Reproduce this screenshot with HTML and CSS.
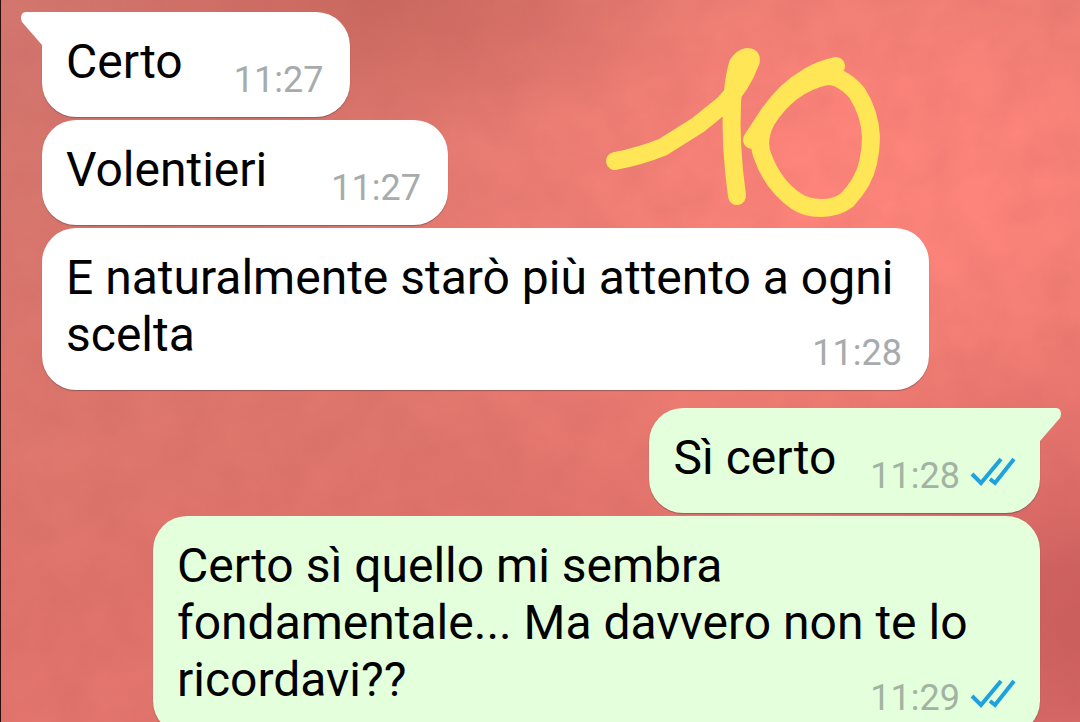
FILE: index.html
```html
<!DOCTYPE html>
<html lang="it">

<head>
    <meta charset="UTF-8">
    <meta name="viewport" content="width=device-width, initial-scale=1.0">
    <title>Chat</title>
    <link rel="stylesheet" href="styles.css">
</head>

<body>
    <main class="chat">
        <!-- mottled wallpaper -->
        <svg class="texture" aria-hidden="true">
            <filter id="mottle">
                <feTurbulence type="fractalNoise" baseFrequency="0.023" numOctaves="4" seed="9"/>
                <feColorMatrix values="0 0 0 0 0.5  0 0 0 0 0.1  0 0 0 0 0.1  1 0 0 0 -0.3"/>
            </filter>
            <rect width="100%" height="100%" filter="url(#mottle)"/>
        </svg>
        <div class="group incoming">
            <div class="bubble gap-medium">
                <svg class="tail" width="24" height="34" viewBox="0 0 24 34" aria-hidden="true">
                    <path d="M24 0H5C0 0-1 6 1 10L21 33H24Z"/>
                </svg>
                <p class="text">Certo</p>
                <div class="meta"><time>11:27</time></div>
            </div>
            <div class="bubble gap-large">
                <p class="text">Volentieri</p>
                <div class="meta"><time>11:27</time></div>
            </div>
            <div class="bubble long">
                <p class="text">E naturalmente starò più attento a ogni scelta</p>
                <div class="meta"><time>11:28</time></div>
            </div>
        </div>
        <div class="group outgoing">
            <div class="bubble gap-small">
                <svg class="tail" width="24" height="34" viewBox="0 0 24 34" aria-hidden="true">
                    <path d="M0 0H19C24 0 25 6 23 10L3 33H0Z"/>
                </svg>
                <p class="text">Sì certo</p>
                <div class="meta">
                    <time>11:28</time>
                    <svg class="ticks" width="46" height="30" viewBox="0 0 46 30" role="img" aria-label="Letto">
                        <path d="M2 17L11 26L31 2M20 22L25 26L44 2"/>
                    </svg>
                </div>
            </div>
            <div class="bubble long">
                <p class="text">Certo sì quello mi sembra fondamentale... Ma davvero non te lo ricordavi??</p>
                <div class="meta">
                    <time>11:29</time>
                    <svg class="ticks" width="46" height="30" viewBox="0 0 46 30" role="img" aria-label="Letto">
                        <path d="M2 17L11 26L31 2M20 22L25 26L44 2"/>
                    </svg>
                </div>
            </div>
        </div>
        <!-- handwritten mark over the wallpaper -->
        <svg class="scribble" width="290" height="180" viewBox="0 0 290 180" role="img" aria-label="10">
            <path d="M14 116Q40 111 62 102L97 80L123 59Q141 40 149 18Q152 12 146 12Q141 13 137 19Q133 31 131 58Q129 100 136 151"/>
            <path class="fill" d="M131 56L137 19L149 14L146 32Z"/>
            <path d="M151 95L164 75Q182 46 207 32Q220 24 235 21M226 31Q188 39 165 76Q155 96 162 112Q172 140 195 156Q205 163 220 163Q236 163 246 155Q263 137 267 118Q270 105 270 92Q269 68 256 48Q249 39 237 33Q232 31 226 31"/>
            <path class="fill" d="M207 32L235 21L243 32L226 32L196 46Z"/>
        </svg>
    </main>
</body>

</html>
```

FILE: styles.css
```css
body {
    margin: 0;
    overflow: hidden;
    font-family: Roboto, sans-serif;
    color: #000;
}

.chat {
    position: relative;
    box-sizing: border-box;
    min-height: 100vh;
    padding: 12px 40px 0 41px;
    border-left: 1px solid #2a0c0c;
    display: flex;
    flex-direction: column;
    gap: 18px;
    background:
        radial-gradient(ellipse 30% 20% at 36% 0%, rgba(196, 98, 88, 0.7), rgba(196, 98, 88, 0) 100%),
        radial-gradient(ellipse 60% 55% at 84% 24%, rgba(252, 132, 122, 1) 20%, rgba(252, 132, 122, 0) 100%),
        radial-gradient(ellipse 30% 55% at 100% 85%, rgba(190, 82, 84, 0.7), rgba(190, 82, 84, 0) 100%),
        linear-gradient(165deg, #d2766e 0%, #de776d 45%, #e0736b 65%, #f0807a 100%);
}

.texture {
    position: absolute;
    top: 0;
    left: 0;
    width: 100%;
    height: 100%;
    opacity: 0.25;
}

.group {
    display: flex;
    flex-direction: column;
    gap: 3px;
    align-items: flex-start;
}

.outgoing {
    align-items: flex-end;
}

.bubble {
    position: relative;
    box-sizing: border-box;
    max-width: 887px;
    padding: 21px 27px 27px 24px;
    border-radius: 34px;
    background-color: #fff;
    box-shadow: 0 1px 1px rgba(90, 60, 60, 0.5);
    display: flex;
    align-items: flex-end;
    font-size: 48px;
    line-height: 57px;
}

.incoming .bubble:first-child {
    border-top-left-radius: 0;
}

.outgoing .bubble {
    padding-right: 24px;
    background-color: #e4ffdb;
}

.outgoing .bubble:first-child {
    border-top-right-radius: 0;
}

.gap-small {
    gap: 34px;
}

.gap-medium {
    gap: 51px;
}

.gap-large {
    gap: 64px;
}

.text {
    margin: 0;
}

.meta {
    display: flex;
    align-items: center;
    gap: 10px;
    margin-bottom: -11px;
    font-size: 36px;
    line-height: 42px;
    color: #a7abab;
}

.outgoing .meta {
    color: #a3b3a3;
}

/* the time floats at the end of the last line of a long message */
.long {
    display: block;
}

.long .text {
    display: inline;
}

.long .meta {
    float: right;
    margin-top: 26px;
}

.tail {
    position: absolute;
    top: 0;
    left: -21px;
    fill: #fff;
}

.outgoing .tail {
    left: auto;
    right: -21px;
    fill: #e4ffdb;
}

.ticks {
    margin-bottom: 8px;
    fill: none;
    stroke: #1ea2de;
    stroke-width: 4;
}

.scribble {
    position: absolute;
    top: 45px;
    left: 600px;
    fill: none;
    stroke: #ffe656;
    stroke-width: 18;
    stroke-linecap: round;
    stroke-linejoin: round;
}

.scribble .fill {
    fill: #ffe656;
    stroke: none;
}
```
